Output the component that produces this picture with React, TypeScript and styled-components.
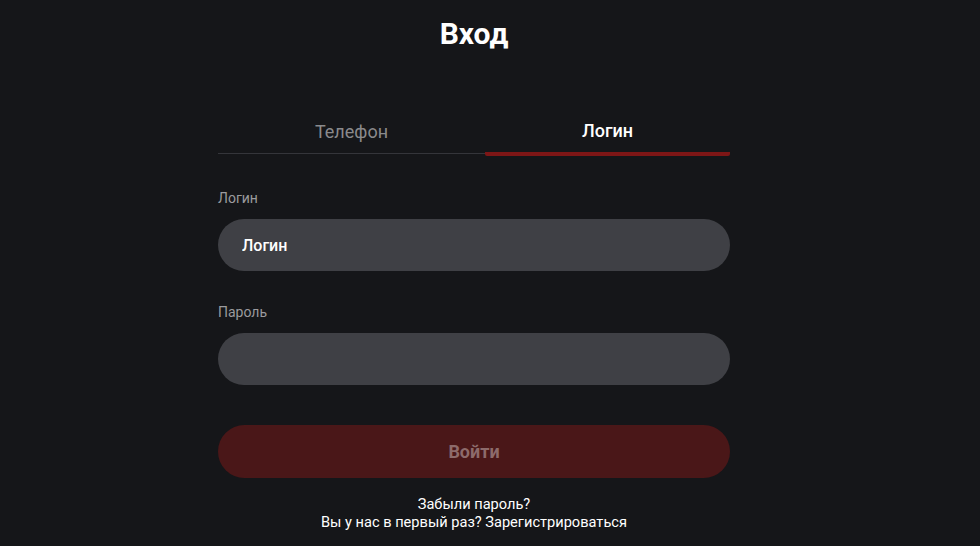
import React, { useState } from 'react';
import styled, { createGlobalStyle } from 'styled-components';

const BG = '#151619';
const FIELD = '#3f4045';
const ACCENT = '#7d1616';

const GlobalStyle = createGlobalStyle`
  html, body {
    margin: 0;
    padding: 0;
    background: ${BG};
    font-family: Roboto, "Noto Sans", sans-serif;
  }
`;

type Tab = 'phone' | 'login';

export default function App() {
  let [tab, setTab] = useState<Tab>('login');
  return (
    <Page>
      <GlobalStyle />
      <Title>Вход</Title>
      <Form onSubmit={(e) => e.preventDefault()}>
        <Tabs>
          <TabButton type="button" active={tab === 'phone'} onClick={() => setTab('phone')}>
            Телефон
          </TabButton>
          <TabButton type="button" active={tab === 'login'} onClick={() => setTab('login')}>
            Логин
          </TabButton>
        </Tabs>
        <Field>
          <Label>Логин</Label>
          <Input placeholder="Логин" />
        </Field>
        <Field>
          <Label>Пароль</Label>
          <Input type="password" />
        </Field>
        <SubmitButton type="submit">Войти</SubmitButton>
        <Links>
          <LinkText>Забыли пароль?</LinkText>
          <LinkText>Вы у нас в первый раз? Зарегистрироваться</LinkText>
        </Links>
      </Form>
    </Page>
  );
}

const Page = styled.div`
  width: 980px;
  height: 546px;
  box-sizing: border-box;
  padding: 15px 32px 0 0;
  display: flex;
  flex-direction: column;
  align-items: center;
  overflow: hidden;
`;
const Title = styled.h1`
  margin: 0;
  font-size: 30px;
  line-height: 38px;
  font-weight: 700;
  color: #ffffff;
`;
const Form = styled.form`
  width: 512px;
  margin-top: 67px;
  display: flex;
  flex-direction: column;
`;
const Tabs = styled.div`
  display: grid;
  grid-template-columns: 267px 245px;
`;

type TabProps = { active: boolean };

const TabButton = styled.button<TabProps>`
  background: none;
  border: none;
  padding: 0 0 11px;
  font-family: inherit;
  font-size: 18px;
  line-height: 21px;
  font-weight: ${(p) => (p.active ? 500 : 400)};
  cursor: pointer;
  color: ${(p) => (p.active ? '#ffffff' : '#8a8a8c')};
  border-bottom: ${(p) => (p.active ? `4px solid ${ACCENT}` : '1px solid #34353a')};
  border-radius: ${(p) => (p.active ? '2px' : '0')};
  margin-bottom: ${(p) => (p.active ? '0' : '2px')};
  height: ${(p) => (p.active ? '36px' : '33px')};
  align-self: end;
`;
const Field = styled.label`
  display: flex;
  flex-direction: column;
  margin-top: 33px;
  & + & {
    margin-top: 32px;
  }
`;
const Label = styled.span`
  font-size: 14px;
  line-height: 18px;
  color: #9b9b9e;
  margin-bottom: 12px;
`;
const Input = styled.input`
  height: 52px;
  box-sizing: border-box;
  border: none;
  border-radius: 26px;
  background: ${FIELD};
  padding: 0 24px;
  font-family: inherit;
  font-size: 16px;
  font-weight: 500;
  color: #ffffff;
  outline: none;
  &::placeholder {
    color: #ffffff;
  }
`;
const SubmitButton = styled.button`
  margin-top: 40px;
  height: 53px;
  border: none;
  border-radius: 27px;
  background: #4a1718;
  color: #8d6b6b;
  font-family: inherit;
  font-size: 18px;
  font-weight: 700;
  cursor: pointer;
`;
const Links = styled.div`
  margin-top: 17px;
  display: flex;
  flex-direction: column;
  align-items: center;
`;
const LinkText = styled.span`
  font-size: 14.6px;
  line-height: 18px;
  color: #ffffff;
  cursor: pointer;
`;
